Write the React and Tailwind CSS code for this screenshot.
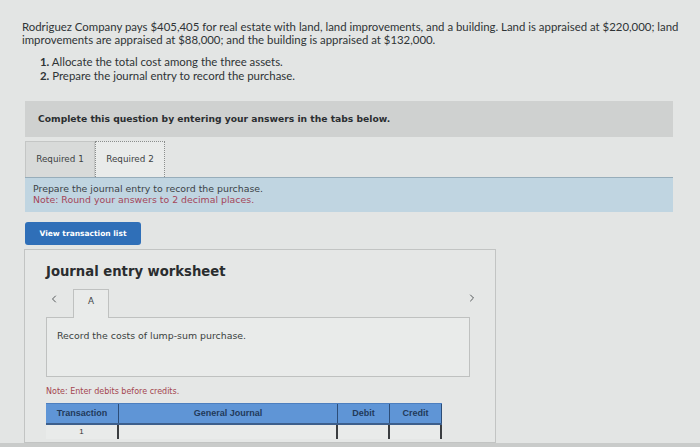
import { ChevronLeft, ChevronRight } from 'lucide-react';

const verdana = { fontFamily: '"DejaVu Sans", Verdana, sans-serif' };

const Header = () => (
    <div className="pl-[22px] pr-[18px] pt-[20px] text-[11.4px] leading-[13px] text-[#2f3436]" style={{ fontFamily: 'Lato, "Open Sans", sans-serif' }}>
        <p>
            Rodriguez Company pays $405,405 for real estate with land, land improvements, and a building. Land is appraised at $220,000; land
            improvements are appraised at $88,000; and the building is appraised at $132,000.
        </p>
        <ol className="mt-[9px] pl-[18px] leading-[14px]">
            <li><span className="font-bold">1.</span> Allocate the total cost among the three assets.</li>
            <li><span className="font-bold">2.</span> Prepare the journal entry to record the purchase.</li>
        </ol>
    </div>
);

const Tabs = () => (
    <div className="flex h-[36px] mt-[4px]" style={verdana}>
        <div className="w-[70px] flex items-center justify-center bg-[#d8dad9] border border-[#c4c6c5] border-b-0 text-[8.8px] text-[#3d4244]">
            Required 1
        </div>
        <div className="w-[70px] flex items-center justify-center bg-[#e9ebea] border border-dotted border-[#8a8d8c] border-b-0 text-[8.8px] text-[#3d4244]">
            Required 2
        </div>
    </div>
);

const JournalTable = () => (
    <div className="mt-[6px] w-[396px] text-[9px]" style={{ fontFamily: '"Liberation Sans", Arial, sans-serif' }}>
        <div className="flex h-[20px] bg-[#5f95d6] border-t border-[#4d7fbf] font-bold text-[#223a5a]">
            <div className="w-[73px] flex items-center justify-center border-r border-[#2c4d78]">Transaction</div>
            <div className="w-[219px] flex items-center justify-center border-r border-[#2c4d78]">General Journal</div>
            <div className="w-[52px] flex items-center justify-center border-r border-[#2c4d78]">Debit</div>
            <div className="w-[52px] flex items-center justify-center border-r border-[#2c4d78]">Credit</div>
        </div>
        <div className="flex h-[16px] bg-[#e9ebea] border-t-2 border-[#3d5f8c] text-[#333]">
            <div className="w-[73px] flex items-center justify-center border-r-2 border-[#3a3d40] text-[8px]">1</div>
            <div className="w-[219px] border-r-2 border-[#3a3d40]"></div>
            <div className="w-[52px] border-r-2 border-[#3a3d40]"></div>
            <div className="w-[52px] border-r-2 border-[#3a3d40]"></div>
        </div>
    </div>
);

const Worksheet = () => (
    <div className="ml-[24px] mt-[4px] w-[472px] h-[194px] border border-[#c2c4c3] bg-[#e5e7e6] pl-[21px] pt-[13px]" style={verdana}>
        <h2 className="text-[13.2px] font-bold text-[#2a2d2f] leading-[18px]">Journal entry worksheet</h2>
        <div className="flex items-end mt-[8px] w-[432px]">
            <ChevronLeft className="w-[12px] h-[12px] text-[#55595b] ml-[2px] mb-[12px]" strokeWidth={2} />
            <div className="ml-[13px] w-[36px] h-[29px] -mb-px border border-b-0 border-[#bfc1c0] bg-[#e9ebea] flex justify-center pt-[5px] text-[8.8px] text-[#3d4244] relative z-10">A</div>
            <div className="flex-1"></div>
            <ChevronRight className="w-[12px] h-[12px] text-[#55595b] mb-[13px]" strokeWidth={2} />
        </div>
        <div className="w-[424px] h-[60px] border border-[#bfc1c0] bg-[#e9ebea] pl-[10px] pt-[11px] text-[9.4px] text-[#3a3f41]">
            Record the costs of lump-sum purchase.
        </div>
        <p className="mt-[10px] text-[8px] text-[#a4464f] leading-[10px]">Note: Enter debits before credits.</p>
        <JournalTable />
    </div>
);

const App = () => (
    <div className="w-[700px] h-[447px] overflow-hidden bg-[#e3e5e4] flex flex-col">
        <Header />
        <div className="ml-[25px] w-[648px] mt-[18px]" style={verdana}>
            <div className="h-[36px] bg-[#cfd1d0] flex items-center pl-[13px] text-[9.2px] font-bold text-[#2b2e30]">
                Complete this question by entering your answers in the tabs below.
            </div>
            <Tabs />
            <div className="h-[35px] bg-[#c0d5e1] border-t border-[#97adba] pl-[8px] pt-[5px] text-[9.4px] leading-[11px]">
                <p className="text-[#3b4247]">Prepare the journal entry to record the purchase.</p>
                <p className="text-[#a5465a]">Note: Round your answers to 2 decimal places.</p>
            </div>
            <button className="mt-[10px] w-[116px] h-[23px] bg-[#2f6fb8] rounded-[3px] text-white text-[7.5px] font-bold flex items-center justify-center">
                View transaction list
            </button>
        </div>
        <Worksheet />
        <div className="flex-1 bg-[#c9cbca]"></div>
    </div>
);

export default App;
